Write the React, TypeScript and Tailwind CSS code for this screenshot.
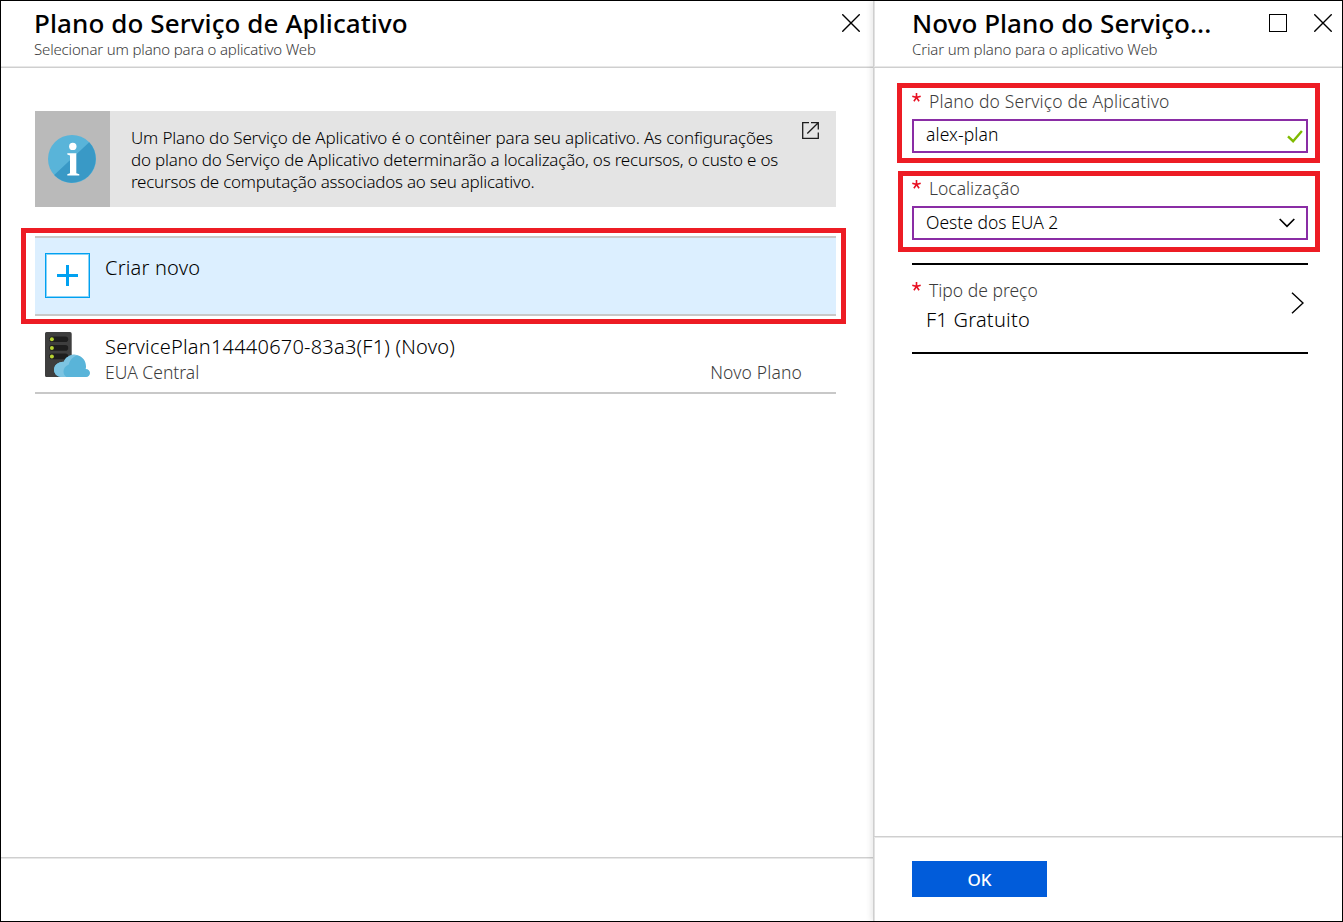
import type { ReactNode } from "react";

function CloseIcon() {
  return (
    <svg width="18" height="18" viewBox="0 0 18 18" fill="none" stroke="#000" strokeWidth="1.4">
      <path d="M0.3 0.3 17.7 17.7M17.7 0.3 0.3 17.7" />
    </svg>
  );
}

function InfoIcon() {
  return (
    <svg width="48" height="48" viewBox="0 0 48 48">
      <circle cx="24" cy="24" r="24" fill="#59b4d9" />
      <path d="M41.2 7.2A24 24 0 1 1 6.2 40.1Z" fill="#3999c6" />
      <circle cx="24.8" cy="11.4" r="3.7" fill="#fff" />
      <path d="M19.3 18.2H28.3V38.2L31.3 39.2V40.4H19.3V39.2L22 38.2V20.4L19.3 19.4Z" fill="#fff" />
    </svg>
  );
}

function ExternalIcon() {
  return (
    <svg width="17" height="17" viewBox="0 0 17 17" fill="none" stroke="#1c1c1c" strokeWidth="1.3">
      <path d="M7 0.7H0.7V16.3H16.3V10.5M9 0.7H16.3V7.5M16 1 5.3 11.5" />
    </svg>
  );
}

function ServerIcon() {
  return (
    <svg width="45" height="45" viewBox="0 0 45 45">
      <path d="M1.5 0H25a1.7 1.7 0 0 1 1.7 1.7V45H1.5A1.5 1.5 0 0 1 0 43.5V1.5A1.5 1.5 0 0 1 1.5 0Z" fill="#3e3e3e" />
      {[7.3, 15.9, 24.4].map((y) => (
        <g key={y}>
          <rect x="4.2" y={y - 2.8} width="19" height="5.6" rx="2.8" fill="#1e1e1e" />
          <circle cx="6.9" cy={y} r="2" fill="#b8d432" />
        </g>
      ))}
      <path d="M41.2 45H15.8a6.9 6.9 0 0 1-6.8-7.2c0-4.500 3.900-8.300 9.800-8.100C20.500 25.500 24.800 22.800 29.500 22.800c6.500 0 11.500 5.200 11.500 11.500 0 .9 0 1.700-.3 2.600C43.300 36.900 45 38.700 45 41c0 2.200-1.600 4-3.800 4Z" fill="#59b4d9" />
      <path d="M21.500 45H15.800a6.900 6.900 0 0 1-6.800-7.200c0-4.500 3.900-8.300 9.800-8.100C20.500 25.500 24.800 22.800 29.500 22.800c1.200 0 2.300.2 3.300.5-4.600 1.200-7.900 4.500-9 9.200-3.300 1.300-5.300 3.900-5.300 7.200 0 2.200 1.100 4.200 3 5.300Z" fill="#7dc4e2" />
    </svg>
  );
}

function Header({ title, subtitle, actions }: { title: ReactNode; subtitle: ReactNode; actions: ReactNode }) {
  return (
    <header className="flex h-[67px] shrink-0 items-start justify-between border-b border-[#cfcfcf] pt-1.5 shadow-[inset_0_-1px_0_#e8e8e8]">
      <div>
        <h1 className="h-8 text-[26px]/8 font-medium text-black">{title}</h1>
        <p className="text-[15px]/5 text-[#3c3c3c]">{subtitle}</p>
      </div>
      {actions}
    </header>
  );
}

function Label({ children }: { children: ReactNode }) {
  return (
    <div className="flex h-6 items-start text-[17.5px]/6 text-[#3c3c3c]">
      <svg className="mt-1 mr-2 shrink-0" width="9" height="9" viewBox="0 0 9 9" stroke="#e81123" strokeWidth="1.6">
        <path d="M4.500 4.500V0M4.500 4.500 .3 3.200M4.500 4.500 8.700 3.200M4.500 4.500 1.900 8.200M4.500 4.500 7.100 8.200" />
      </svg>
      {children}
    </div>
  );
}

export default function App() {
  return (
    <div className="flex h-[922px] w-[1343px] overflow-hidden border border-black bg-white font-['Noto_Sans','Open_Sans',sans-serif] font-light text-black">
      <section className="flex w-[872px] shrink-0 flex-col">
        <div className="[&>header]:pr-[13px] [&>header]:pl-[33px]">
          <Header
            title={<span className="tracking-[0.09px]">Plano do Serviço de Aplicativo</span>}
            subtitle={<span className="tracking-[-0.16px]">Selecionar um plano para o aplicativo Web</span>}
            actions={<div className="mt-[7px]"><CloseIcon /></div>}
          />
        </div>

        <main className="flex-1 pt-[43px]">
          <div className="ml-[34px] flex h-24 w-[801px] bg-[#e4e4e4]">
            <div className="flex w-[75px] items-center bg-[#bababa] pl-[13px]">
              <InfoIcon />
            </div>
            <div className="flex flex-1 items-start justify-between pt-4 pr-[17px] pl-[21px]">
              <p className="text-[17px]/[22px] whitespace-nowrap">
                <span className="block tracking-[-0.16px]">Um Plano do Serviço de Aplicativo é o contêiner para seu aplicativo. As configurações</span>
                <span className="block tracking-[-0.19px]">do plano do Serviço de Aplicativo determinarão a localização, os recursos, o custo e os</span>
                <span className="block tracking-[-0.24px]">recursos de computação associados ao seu aplicativo.</span>
              </p>
              <div className="-mt-[5px]"><ExternalIcon /></div>
            </div>
          </div>

          <div className="mt-[21px] ml-5 h-24 w-[825px] border-[5px] border-[#ed1c24] py-[3px] pr-[5px] pl-[9px]">
            <div className="flex h-20 items-start gap-[15px] border-y-2 border-[#c8c8c8] bg-[#dcefff] pt-[15px] pl-2.5">
              <div className="flex size-[45px] items-center justify-center border border-[#00a1f1] bg-white shadow-[inset_0_0_0_1px_#8bd3f7]">
                <svg width="21" height="21" viewBox="0 0 21 21" stroke="#00a1f1" strokeWidth="3">
                  <path d="M10.500 0V21M0 10.500H21" />
                </svg>
              </div>
              <span className="mt-px text-[20px]/7 tracking-[0.2px]">Criar novo</span>
            </div>
          </div>

          <div className="ml-[34px] flex h-[70px] w-[801px] gap-[15px] border-b-2 border-[#c8c8c8] pt-2 pr-[34px] pl-2.5">
            <ServerIcon />
            <div className="flex-1 pt-px">
              <div className="h-[27px] text-[20px]/7 tracking-[0.22px]">ServicePlan14440670-83a3(F1) (Novo)</div>
              <div className="flex justify-between text-[17.5px]/6 text-[#3c3c3c]">
                <span>EUA Central</span>
                <span className="tracking-[0.15px]">Novo Plano</span>
              </div>
            </div>
          </div>
        </main>

        <footer className="h-16 shrink-0 border-t border-[#cfcfcf] shadow-[inset_0_1px_0_#e8e8e8]" />
      </section>

      <section className="flex flex-1 flex-col border-l border-[#cfcfcf] shadow-[inset_1px_0_0_#e2e2e2,-2px_0_6px_rgba(0,0,0,0.09)]">
        <div className="[&>header]:pr-[10px] [&>header]:pl-[38px]">
          <Header
            title={<span className="tracking-[0.05px]">Novo Plano do Serviço...</span>}
            subtitle={<span className="tracking-[-0.14px]">Criar um plano para o aplicativo Web</span>}
            actions={
              <div className="mt-[7px] flex gap-[27px]">
                <div className="size-[18px] border border-black" />
                <CloseIcon />
              </div>
            }
          />
        </div>

        <main className="flex-1 pt-[15px]">
          <div className="ml-[23px] h-20 w-[423px] border-[5px] border-[#ed1c24] pt-px pl-2.5">
            <Label><span className="tracking-[0.14px]">Plano do Serviço de Aplicativo</span></Label>
            <div className="mt-[6px] flex h-[34px] w-[396px] items-center justify-between border-2 border-[#8a2da5] pr-[3px] pl-3">
              <span className="pb-1 text-[17.5px]/6 tracking-[0.1px]">alex-plan</span>
              <svg className="mt-px" width="16" height="13" viewBox="0 0 16 13" fill="none" stroke="#7fba00" strokeWidth="2.4">
                <path d="M1 6.300 6.100 11.200 14.900 1" />
              </svg>
            </div>
          </div>

          <div className="mt-2 ml-6 h-[81px] w-[422px] border-[5px] border-[#ed1c24] pl-[9px]">
            <Label>Localização</Label>
            <div className="mt-[6px] flex h-[34px] w-[396px] items-center justify-between border-2 border-[#8a2da5] pr-[11px] pl-3">
              <span className="pb-0.5 text-[17.5px]/6">Oeste dos EUA 2</span>
              <svg width="16" height="10" viewBox="0 0 16 10" fill="none" stroke="#000" strokeWidth="1.7">
                <path d="M.7 1 8 8.300 15.300 1" />
              </svg>
            </div>
          </div>

          <div className="mt-[11px] ml-[38px] flex h-[91px] w-[396px] items-start justify-between border-y-2 border-black pt-[13px] pr-1">
            <div>
              <Label>Tipo de preço</Label>
              <div className="mt-1 pl-[14px] text-[20px]/7 tracking-[0.24px]">F1 Gratuito</div>
            </div>
            <svg className="mt-[14px]" width="13" height="22" viewBox="0 0 13 22" fill="none" stroke="#000" strokeWidth="1.4">
              <path d="M1 .7 12 11 1 21.300" />
            </svg>
          </div>
        </main>

        <footer className="h-[85px] shrink-0 border-t border-[#cfcfcf] pt-6 pl-[38px] shadow-[inset_0_1px_0_#e8e8e8]">
          <button className="block h-9 w-[135px] bg-[#015cda] pt-px text-[17px]/[35px] font-medium text-white">OK</button>
        </footer>
      </section>
    </div>
  );
}
